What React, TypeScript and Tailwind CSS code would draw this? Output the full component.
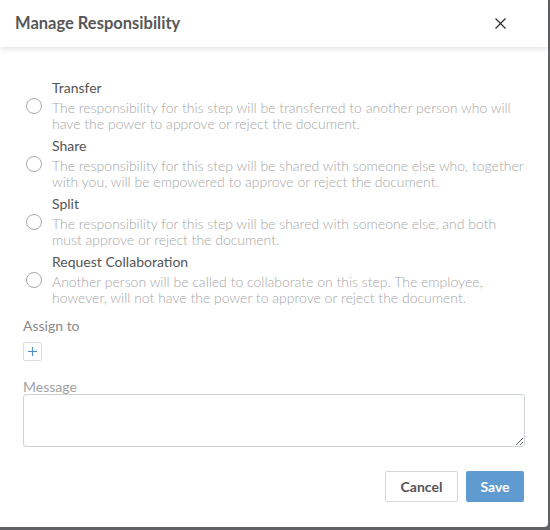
import { useState } from 'react';

type Choice = {
  id: string;
  title: string;
  text: string;
};

const choices: Choice[] = [
  {
    id: 'transfer',
    title: 'Transfer',
    text: 'The responsibility for this step will be transferred to another person who will have the power to approve or reject the document.',
  },
  {
    id: 'share',
    title: 'Share',
    text: 'The responsibility for this step will be shared with someone else who, together with you, will be empowered to approve or reject the document.',
  },
  {
    id: 'split',
    title: 'Split',
    text: 'The responsibility for this step will be shared with someone else, and both must approve or reject the document.',
  },
  {
    id: 'collab',
    title: 'Request Collaboration',
    text: 'Another person will be called to collaborate on this step. The employee, however, will not have the power to approve or reject the document.',
  },
];

export default function App() {
  const [picked, setPicked] = useState<string | null>(null);

  return (
    <div className="h-[530px] w-[550px] overflow-hidden bg-[#5f6265] font-['Lato',sans-serif]">
      <div className="flex h-[527px] w-[548px] flex-col rounded-br-sm bg-white">
        {/* Header */}
        <div className="relative z-10 flex h-[47px] shrink-0 items-center justify-between pl-[15px] pr-[42px] shadow-[0_2px_6px_rgba(0,0,0,0.12)]">
          <h1 className="text-[16.5px] font-bold text-[#585858]">Manage Responsibility</h1>
          <button className="text-[#333]">
            <svg width="11" height="11" viewBox="0 0 11 11" stroke="currentColor" strokeWidth="1.3">
              <path d="M0.5 0.5 L10.5 10.5 M10.5 0.5 L0.5 10.5" />
            </svg>
          </button>
        </div>

        {/* Body */}
        <div className="flex flex-col pl-[23px] pr-[22px] pt-[31px]">
          <div className="flex flex-col gap-[4px]">
            {choices.map((c) => (
              <label key={c.id} className="flex cursor-pointer items-start gap-[10px]">
                <input
                  type="radio"
                  name="resp"
                  className="sr-only"
                  checked={picked === c.id}
                  onChange={() => setPicked(c.id)}
                />
                <span className="ml-[3px] mt-[20px] flex h-[16px] w-[16px] shrink-0 items-center justify-center rounded-full border border-[#aaa]">
                  {picked === c.id && <span className="h-[8px] w-[8px] rounded-full bg-[#5f9bd1]" />}
                </span>
                <span className="flex flex-col">
                  <span className="mb-[2px] text-[14px] leading-[20px] text-[#555]">{c.title}</span>
                  <span className="text-[14px] font-light leading-[16px] text-[#a6a6a6]">{c.text}</span>
                </span>
              </label>
            ))}
          </div>

          <div className="mt-[11px] text-[14px] leading-[18px] text-[#8a8a8a]">Assign to</div>
          <button className="mt-[7px] flex h-[19px] w-[19px] items-center justify-center rounded-[2px] border border-[#d8dde2] text-[#4a8bd0]">
            <svg width="9" height="9" viewBox="0 0 9 9" stroke="currentColor" strokeWidth="1.2">
              <path d="M4.5 0 V9 M0 4.5 H9" />
            </svg>
          </button>

          <div className="mt-[17px] text-[14px] leading-[18px] text-[#a3a3a3]">Message</div>
          <textarea className="mt-[-2px] h-[53px] w-[502px] resize-y rounded-[3px] border border-[#cdd3d9] outline-none" />

          <div className="mt-[24px] flex justify-end gap-[8px] pr-[2px]">
            <button className="h-[31px] w-[73px] rounded-[2px] border border-[#d8d8d8] bg-white text-[14px] font-bold text-[#555]">
              Cancel
            </button>
            <button className="h-[31px] w-[58px] rounded-[2px] bg-[#5f9bd1] text-[14px] font-bold text-white">
              Save
            </button>
          </div>
        </div>
      </div>
    </div>
  );
}
